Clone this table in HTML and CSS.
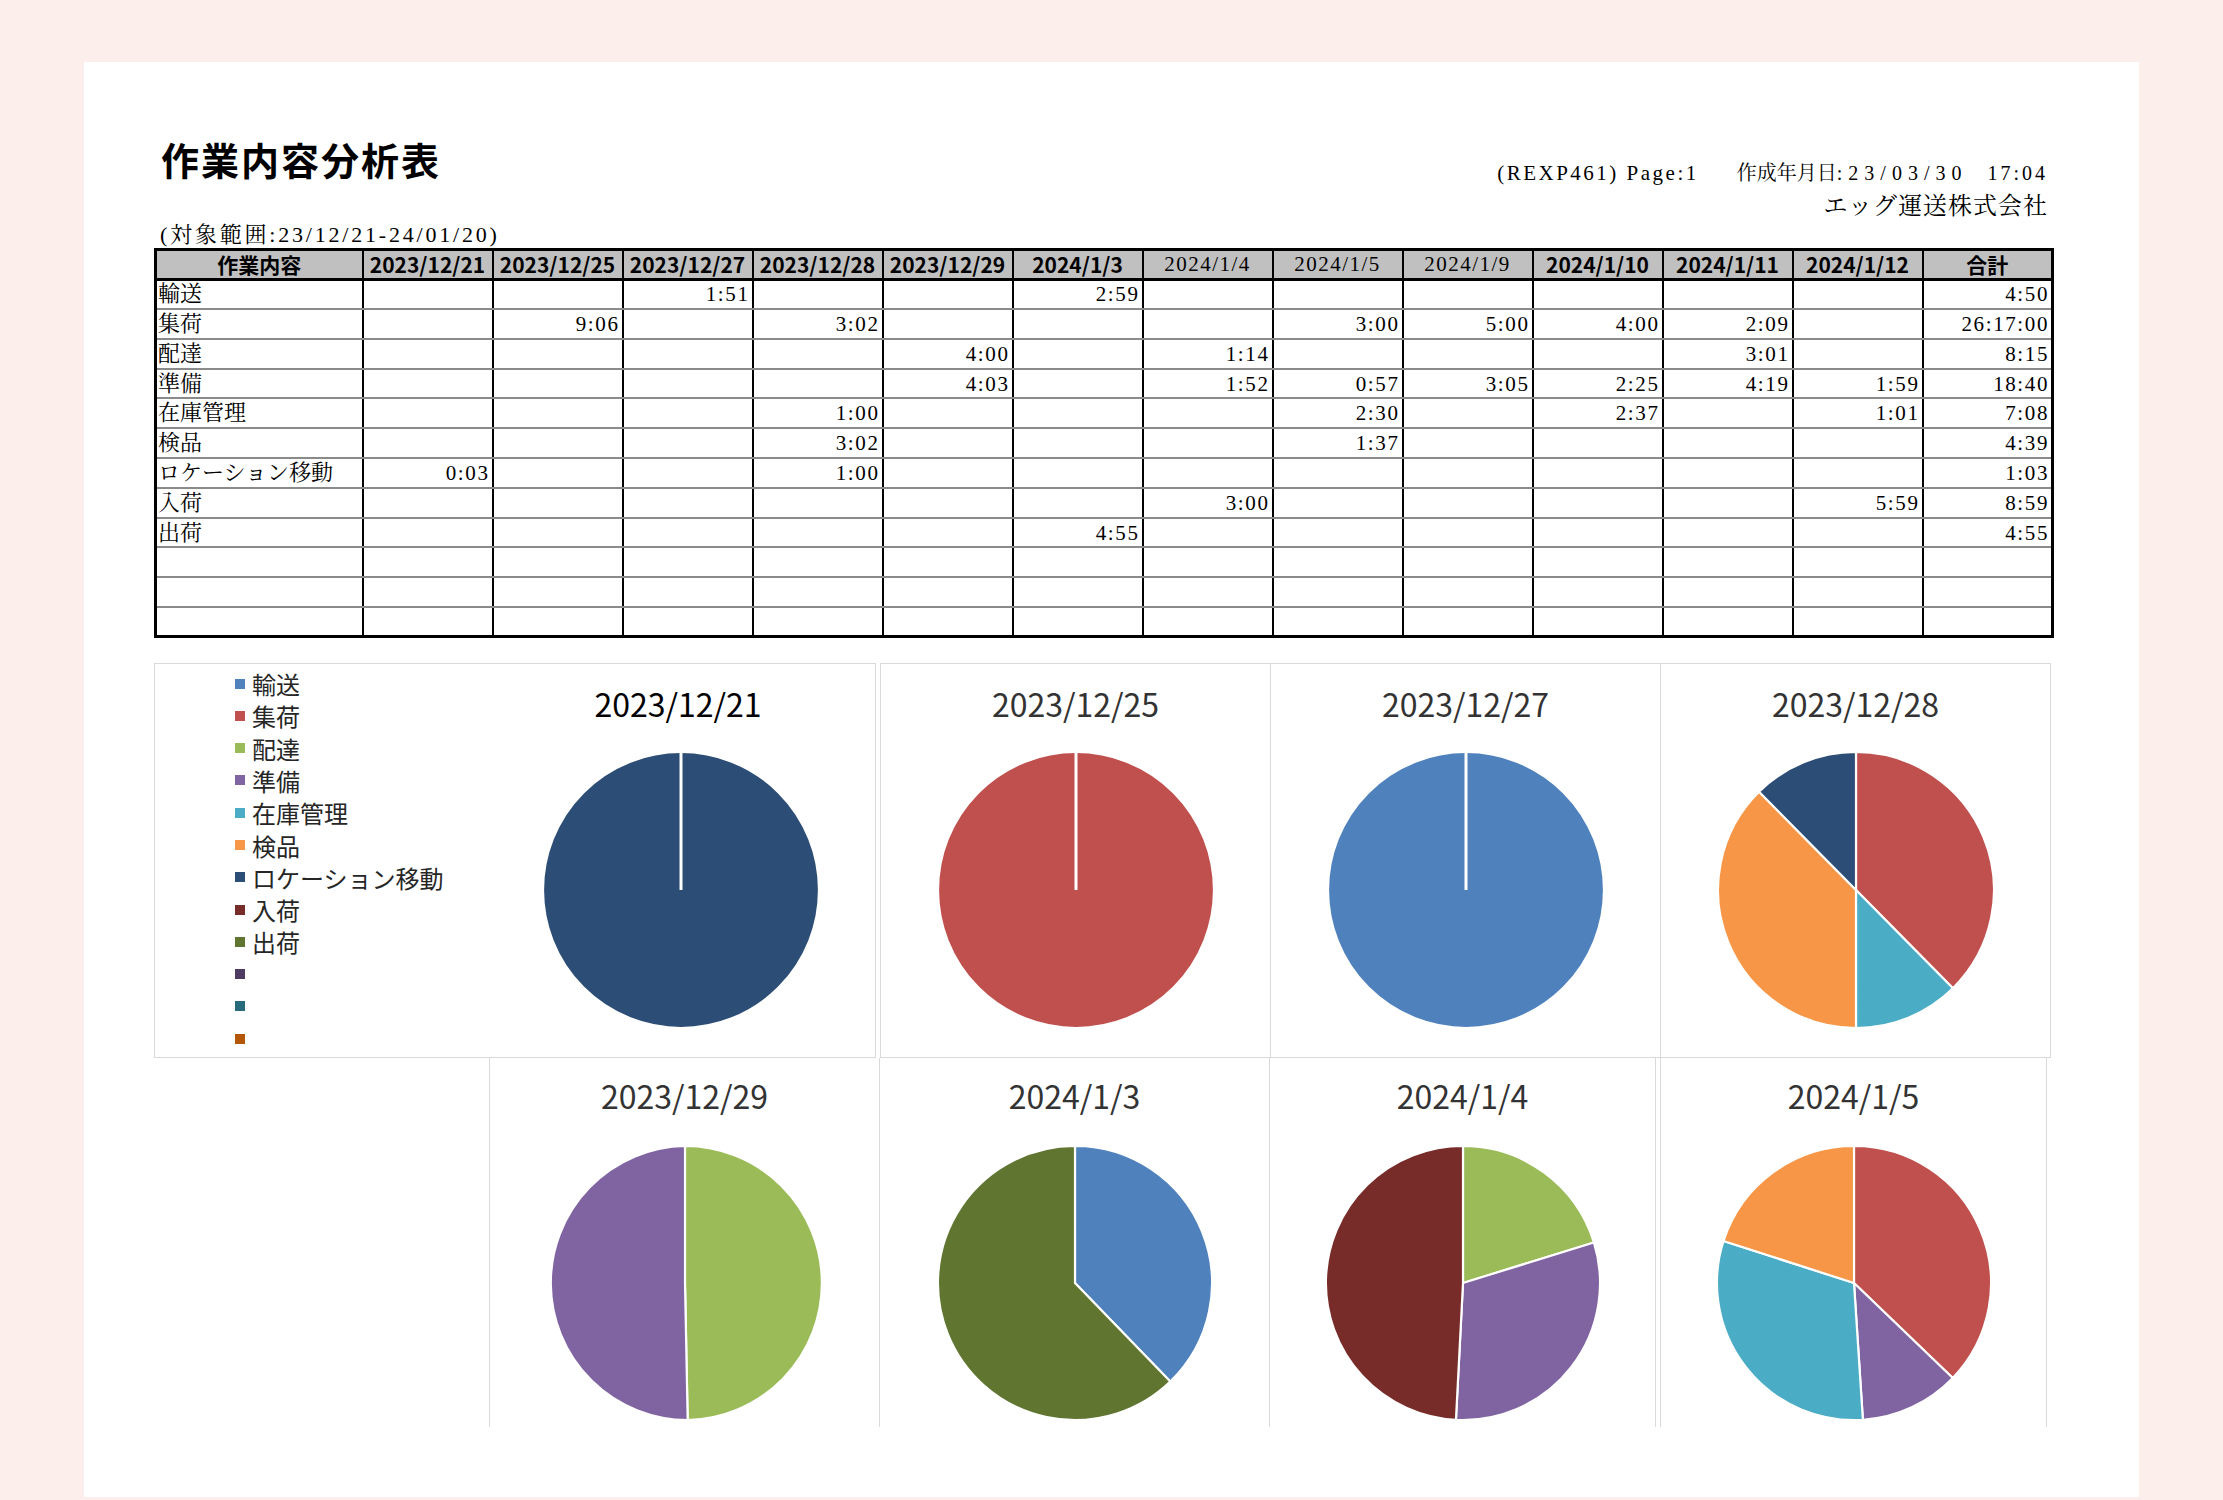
FILE: index.html
```html
<!DOCTYPE html>
<html lang="ja">
<head>
<meta charset="utf-8">
<title>作業内容分析表</title>
<link rel="stylesheet" href="styles.css">
</head>
<body>
<div class="paper">
  <header class="head">
    <div class="head-left">
      <h1 class="title">作業内容分析表</h1>
      <p class="range">(対象範囲:23/12/21-24/01/20)</p>
    </div>
    <div class="head-right">
      <div class="meta"><span class="meta-id">(REXP461) Page:1</span><span class="meta-date">作成年月日</span><span class="meta-num">:23/03/30</span><span class="meta-time">17:04</span></div>
      <div class="company">エッグ運送株式会社</div>
    </div>
  </header>

  <table class="report">
    <colgroup>
      <col class="col-label">
      <col class="col-day"><col class="col-day"><col class="col-day"><col class="col-day">
      <col class="col-day"><col class="col-day"><col class="col-day"><col class="col-day">
      <col class="col-day"><col class="col-day"><col class="col-day"><col class="col-day">
      <col class="col-day">
    </colgroup>
    <thead>
      <tr>
        <th class="hb">作業内容</th>
        <th class="hb">2023/12/21</th>
        <th class="hb">2023/12/25</th>
        <th class="hb">2023/12/27</th>
        <th class="hb">2023/12/28</th>
        <th class="hb">2023/12/29</th>
        <th class="hb">2024/1/3</th>
        <th class="hs">2024/1/4</th>
        <th class="hs">2024/1/5</th>
        <th class="hs">2024/1/9</th>
        <th class="hb">2024/1/10</th>
        <th class="hb">2024/1/11</th>
        <th class="hb">2024/1/12</th>
        <th class="hb">合計</th>
      </tr>
    </thead>
    <tbody>
      <tr><td class="lbl">輸送</td><td class="v"></td><td class="v"></td><td class="v">1:51</td><td class="v"></td><td class="v"></td><td class="v">2:59</td><td class="v"></td><td class="v"></td><td class="v"></td><td class="v"></td><td class="v"></td><td class="v"></td><td class="v">4:50</td></tr>
      <tr><td class="lbl">集荷</td><td class="v"></td><td class="v">9:06</td><td class="v"></td><td class="v">3:02</td><td class="v"></td><td class="v"></td><td class="v"></td><td class="v">3:00</td><td class="v">5:00</td><td class="v">4:00</td><td class="v">2:09</td><td class="v"></td><td class="v">26:17:00</td></tr>
      <tr><td class="lbl">配達</td><td class="v"></td><td class="v"></td><td class="v"></td><td class="v"></td><td class="v">4:00</td><td class="v"></td><td class="v">1:14</td><td class="v"></td><td class="v"></td><td class="v"></td><td class="v">3:01</td><td class="v"></td><td class="v">8:15</td></tr>
      <tr><td class="lbl">準備</td><td class="v"></td><td class="v"></td><td class="v"></td><td class="v"></td><td class="v">4:03</td><td class="v"></td><td class="v">1:52</td><td class="v">0:57</td><td class="v">3:05</td><td class="v">2:25</td><td class="v">4:19</td><td class="v">1:59</td><td class="v">18:40</td></tr>
      <tr><td class="lbl">在庫管理</td><td class="v"></td><td class="v"></td><td class="v"></td><td class="v">1:00</td><td class="v"></td><td class="v"></td><td class="v"></td><td class="v">2:30</td><td class="v"></td><td class="v">2:37</td><td class="v"></td><td class="v">1:01</td><td class="v">7:08</td></tr>
      <tr><td class="lbl">検品</td><td class="v"></td><td class="v"></td><td class="v"></td><td class="v">3:02</td><td class="v"></td><td class="v"></td><td class="v"></td><td class="v">1:37</td><td class="v"></td><td class="v"></td><td class="v"></td><td class="v"></td><td class="v">4:39</td></tr>
      <tr><td class="lbl">ロケーション移動</td><td class="v">0:03</td><td class="v"></td><td class="v"></td><td class="v">1:00</td><td class="v"></td><td class="v"></td><td class="v"></td><td class="v"></td><td class="v"></td><td class="v"></td><td class="v"></td><td class="v"></td><td class="v">1:03</td></tr>
      <tr><td class="lbl">入荷</td><td class="v"></td><td class="v"></td><td class="v"></td><td class="v"></td><td class="v"></td><td class="v"></td><td class="v">3:00</td><td class="v"></td><td class="v"></td><td class="v"></td><td class="v"></td><td class="v">5:59</td><td class="v">8:59</td></tr>
      <tr><td class="lbl">出荷</td><td class="v"></td><td class="v"></td><td class="v"></td><td class="v"></td><td class="v"></td><td class="v">4:55</td><td class="v"></td><td class="v"></td><td class="v"></td><td class="v"></td><td class="v"></td><td class="v"></td><td class="v">4:55</td></tr>
      <tr><td class="lbl"></td><td class="v"></td><td class="v"></td><td class="v"></td><td class="v"></td><td class="v"></td><td class="v"></td><td class="v"></td><td class="v"></td><td class="v"></td><td class="v"></td><td class="v"></td><td class="v"></td><td class="v"></td></tr>
      <tr><td class="lbl"></td><td class="v"></td><td class="v"></td><td class="v"></td><td class="v"></td><td class="v"></td><td class="v"></td><td class="v"></td><td class="v"></td><td class="v"></td><td class="v"></td><td class="v"></td><td class="v"></td><td class="v"></td></tr>
      <tr><td class="lbl"></td><td class="v"></td><td class="v"></td><td class="v"></td><td class="v"></td><td class="v"></td><td class="v"></td><td class="v"></td><td class="v"></td><td class="v"></td><td class="v"></td><td class="v"></td><td class="v"></td><td class="v"></td></tr>
    </tbody>
  </table>

  <section class="charts">
    <div class="chart-row top">
      <div class="panel panel-legend">
        <ul class="legend">
          <li class="lg-item"><span class="sw c1"></span>輸送</li>
          <li class="lg-item"><span class="sw c2"></span>集荷</li>
          <li class="lg-item"><span class="sw c3"></span>配達</li>
          <li class="lg-item"><span class="sw c4"></span>準備</li>
          <li class="lg-item"><span class="sw c5"></span>在庫管理</li>
          <li class="lg-item"><span class="sw c6"></span>検品</li>
          <li class="lg-item"><span class="sw c7"></span>ロケーション移動</li>
          <li class="lg-item"><span class="sw c8"></span>入荷</li>
          <li class="lg-item"><span class="sw c9"></span>出荷</li>
          <li class="lg-item"><span class="sw c10"></span></li>
          <li class="lg-item"><span class="sw c11"></span></li>
          <li class="lg-item"><span class="sw c12"></span></li>
        </ul>
        <div class="chart">
          <div class="chart-title first">2023/12/21</div>
          <svg class="pie" viewBox="-145 -145 290 290" width="290" height="290">
            <circle r="138" class="f7"/>
            <line x1="0" y1="0" x2="0" y2="-138" class="sep"/>
          </svg>
        </div>
      </div>
      <div class="panel chart w-b">
        <div class="chart-title">2023/12/25</div>
        <svg class="pie" viewBox="-145 -145 290 290" width="290" height="290">
          <circle r="138" class="f2"/>
          <line x1="0" y1="0" x2="0" y2="-138" class="sep"/>
        </svg>
      </div>
      <div class="panel chart w-c">
        <div class="chart-title">2023/12/27</div>
        <svg class="pie" viewBox="-145 -145 290 290" width="290" height="290">
          <circle r="138" class="f1"/>
          <line x1="0" y1="0" x2="0" y2="-138" class="sep"/>
        </svg>
      </div>
      <div class="panel chart w-d">
        <div class="chart-title">2023/12/28</div>
        <svg class="pie" viewBox="-145 -145 290 290" width="290" height="290">
          <path class="f2" d="M0,0 L0,-138 A138,138 0 0,1 96.94,98.21 Z"/>
          <path class="f5" d="M0,0 L96.94,98.21 A138,138 0 0,1 0,138 Z"/>
          <path class="f6" d="M0,0 L0,138 A138,138 0 0,1 -96.94,-98.21 Z"/>
          <path class="f7" d="M0,0 L-96.94,-98.21 A138,138 0 0,1 0,-138 Z"/>
        </svg>
      </div>
    </div>
    <div class="chart-row bottom">
      <div class="panel chart w-e">
        <div class="chart-title">2023/12/29</div>
        <svg class="pie" viewBox="-145 -145 290 290" width="290" height="290">
          <path class="f3" d="M0,0 L0,-138 A138,138 0 0,1 2.70,137.97 Z"/>
          <path class="f4" d="M0,0 L2.70,137.97 A138,138 0 0,1 0,-138 Z"/>
        </svg>
      </div>
      <div class="panel chart w-f">
        <div class="chart-title">2024/1/3</div>
        <svg class="pie" viewBox="-145 -145 290 290" width="290" height="290">
          <path class="f1" d="M0,0 L0,-138 A138,138 0 0,1 95.95,99.18 Z"/>
          <path class="f9" d="M0,0 L95.95,99.18 A138,138 0 1,1 0,-138 Z"/>
        </svg>
      </div>
      <div class="panel chart w-g">
        <div class="chart-title">2024/1/4</div>
        <svg class="pie" viewBox="-145 -145 290 290" width="290" height="290">
          <path class="f3" d="M0,0 L0,-138 A138,138 0 0,1 131.82,-40.82 Z"/>
          <path class="f4" d="M0,0 L131.82,-40.82 A138,138 0 0,1 -7.10,137.82 Z"/>
          <path class="f8" d="M0,0 L-7.10,137.82 A138,138 0 0,1 0,-138 Z"/>
        </svg>
      </div>
      <div class="panel chart w-h">
        <div class="chart-title">2024/1/5</div>
        <svg class="pie" viewBox="-145 -145 290 290" width="290" height="290">
          <path class="f2" d="M0,0 L0,-138 A138,138 0 0,1 99.47,95.65 Z"/>
          <path class="f4" d="M0,0 L99.47,95.65 A138,138 0 0,1 8.96,137.71 Z"/>
          <path class="f5" d="M0,0 L8.96,137.71 A138,138 0 0,1 -131.36,-42.31 Z"/>
          <path class="f6" d="M0,0 L-131.36,-42.31 A138,138 0 0,1 0,-138 Z"/>
        </svg>
      </div>
    </div>
  </section>
</div>
</body>
</html>
```

FILE: styles.css
```css
html, body {
  margin: 0;
}

body {
  background: #fcefeb;
  padding: 62px 84px 3px;
  color: #000;
  font-family: "Liberation Serif", "Noto Serif CJK JP", "Noto Sans CJK JP", serif;
}

.paper {
  background: #fff;
  width: 2055px;
  height: 1435px;
  box-sizing: border-box;
  padding: 77px 88px 0 70px;
}

/* ---------- header ---------- */
.head {
  display: flex;
  justify-content: space-between;
  align-items: flex-start;
}

.title {
  margin: -4px 0 0 7px;
  font-family: "Noto Sans CJK JP", sans-serif;
  font-weight: 700;
  font-size: 38px;
  line-height: 48px;
  letter-spacing: 2px;
}

.range {
  margin: 39px 0 0 6px;
  font-size: 22px;
  line-height: 26px;
  letter-spacing: 2.8px;
}

.head-right {
  margin-top: 20px;
  margin-right: 3px;
  text-align: right;
}

.meta {
  font-size: 20px;
  line-height: 28px;
  white-space: nowrap;
}

.meta-id {
  font-size: 21px;
  letter-spacing: 2.5px;
}

.meta-date {
  margin-left: 38px;
}

.meta-num {
  letter-spacing: 6px;
}

.meta-time {
  margin-left: 20px;
  letter-spacing: 3px;
}

.company {
  margin-top: 3px;
  font-size: 24px;
  line-height: 32px;
  letter-spacing: 1px;
}

/* ---------- table ---------- */
.report {
  margin-top: 0;
  width: 1897px;
  table-layout: fixed;
  border-collapse: collapse;
  border: 3px solid #000;
}

.col-label { width: 207px; }
.col-day { width: 130px; }

.report tr {
  height: 29.8px;
}

.report th {
  background: #c0c0c0;
  border-left: 2px solid #000;
  border-right: 2px solid #000;
  border-bottom: 3px solid #000;
  padding: 0;
  text-align: center;
  vertical-align: middle;
  white-space: nowrap;
}

.hb {
  font-family: "Noto Sans CJK JP", sans-serif;
  font-weight: 700;
  font-size: 21px;
  line-height: 24px;
}

.hs {
  font-family: "Liberation Serif", "Noto Sans CJK JP", serif;
  font-weight: 400;
  font-size: 21px;
  line-height: 24px;
  letter-spacing: 1.5px;
}

.report td {
  border-left: 2px solid #000;
  border-right: 2px solid #000;
  border-bottom: 2px solid #8a8a8a;
  padding: 0;
  vertical-align: middle;
  white-space: nowrap;
}

.report .lbl {
  padding-left: 1px;
  text-align: left;
  font-size: 22px;
  line-height: 24px;
}

.report .v {
  padding-right: 2px;
  text-align: right;
  font-size: 21px;
  line-height: 24px;
  letter-spacing: 1.6px;
}

/* ---------- charts ---------- */
.charts {
  margin-top: 25px;
}

.chart-row {
  display: flex;
  align-items: flex-start;
}

.panel {
  box-sizing: border-box;
  border: 1px solid #d9d9d9;
  background: #fff;
}

.top .panel {
  height: 395px;
}

.bottom .panel {
  height: 369px;
  border-top: none;
  border-bottom: none;
}

.panel-legend {
  width: 722px;
  display: flex;
}

.legend {
  list-style: none;
  margin: 0;
  padding: 3px 0 0 80px;
  width: 331px;
  box-sizing: border-box;
}

.lg-item {
  display: flex;
  align-items: center;
  height: 32.3px;
  font-family: "Noto Sans CJK JP", sans-serif;
  font-size: 24px;
  color: #262626;
  white-space: nowrap;
}

.sw {
  width: 10px;
  height: 10px;
  margin-right: 7px;
  flex: none;
}

.chart {
  display: flex;
  flex-direction: column;
  align-items: center;
  padding-top: 19px;
}

.panel-legend .chart {
  width: 389px;
}

.chart-title {
  font-family: "Noto Sans CJK JP", sans-serif;
  font-size: 32px;
  line-height: 40px;
  color: #333;
}

.chart-title.first {
  color: #000;
  margin-right: 5px;
}

.pie {
  display: block;
  margin-top: 22px;
}

.bottom .chart {
  padding-top: 17px;
}

.bottom .pie {
  margin-top: 24px;
}

.pie path,
.pie circle {
  stroke: #fff;
  stroke-width: 2.2;
  stroke-linejoin: round;
}

.pie .sep {
  stroke: #fff;
  stroke-width: 3;
}

.w-b { width: 391px; margin-left: 4px; }
.w-c { width: 391px; margin-left: -1px; }
.w-d { width: 391px; margin-left: -1px; }

.w-e { width: 391px; margin-left: 335px; }
.w-f { width: 391px; margin-left: -1px; }
.w-g { width: 387px; margin-left: -1px; }
.w-h { width: 387px; margin-left: 4px; }

/* palette */
.c1 { background: #4f81bd; }
.c2 { background: #c0504d; }
.c3 { background: #9bbb59; }
.c4 { background: #8064a2; }
.c5 { background: #4bacc6; }
.c6 { background: #f79646; }
.c7 { background: #2c4d75; }
.c8 { background: #772c2a; }
.c9 { background: #5f7530; }
.c10 { background: #4d3b62; }
.c11 { background: #276a7c; }
.c12 { background: #b65708; }

.f1 { fill: #4f81bd; }
.f2 { fill: #c0504d; }
.f3 { fill: #9bbb59; }
.f4 { fill: #8064a2; }
.f5 { fill: #4bacc6; }
.f6 { fill: #f79646; }
.f7 { fill: #2c4d75; }
.f8 { fill: #772c2a; }
.f9 { fill: #5f7530; }
```
